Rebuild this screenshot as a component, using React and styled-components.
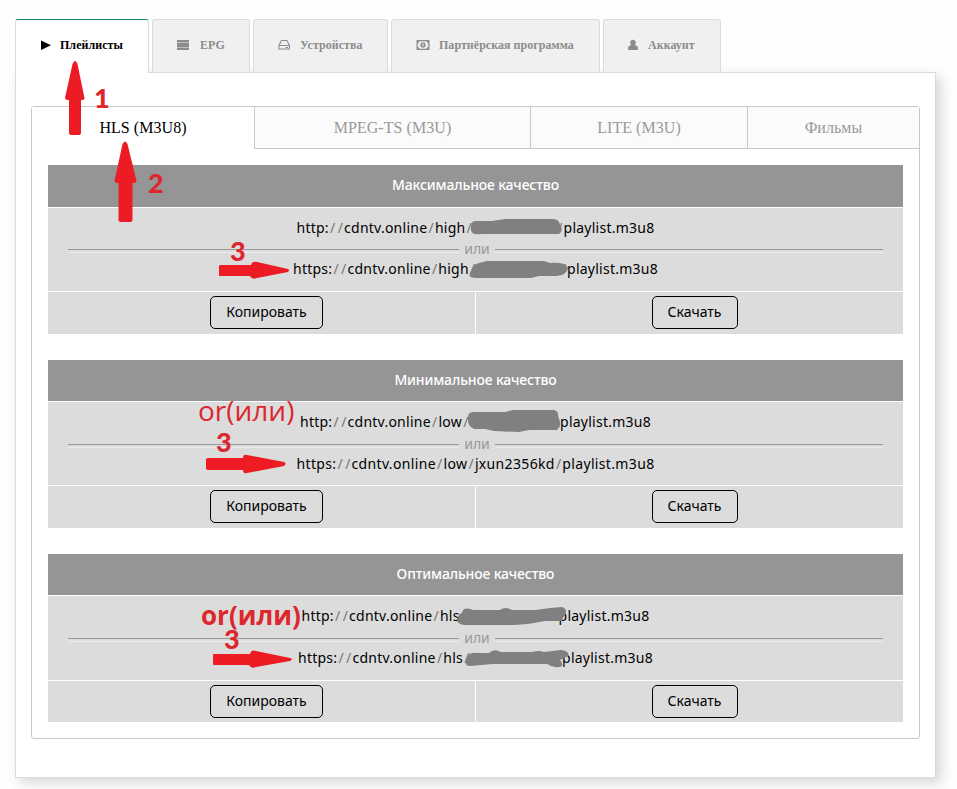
import React from 'react';
import styled, { createGlobalStyle } from 'styled-components';

const GlobalStyle = createGlobalStyle`
  * { box-sizing: border-box; }
  body {
    margin: 0;
    background: #fefefe;
    font-family: "Liberation Serif", "Times New Roman", serif;
  }
`;

const Page = styled.div`
  position: relative;
  width: 957px;
  height: 789px;
  padding: 19px 21px 11px 15px;
  overflow: hidden;
`;

const MainTabs = styled.nav`
  position: relative;
  z-index: 1;
  display: flex;
  gap: 3px;
  height: 53px;
`;

const MainTab = styled.button`
  display: flex;
  align-items: center;
  width: ${(p) => p.$width}px;
  height: ${(p) => (p.$active ? 54 : 53)}px;
  padding: 0 0 ${(p) => (p.$active ? 2 : 1)}px 24px;
  border: 1px solid #dbdbdb;
  border-bottom: 0;
  border-top-color: ${(p) => (p.$active ? '#1f8a55' : '#dbdbdb')};
  border-radius: 3px 3px 0 0;
  background: ${(p) => (p.$active ? '#fff' : '#f0f0f0')};
  color: ${(p) => (p.$active ? '#000' : '#8c8c8c')};
  font: bold 12px "Liberation Serif", serif;
  white-space: nowrap;
`;

const TabIcon = styled.svg`
  flex: none;
  width: ${(p) => p.$width}px;
  height: 12px;
  margin: 0 ${(p) => p.$gap}px 2px 0;
  fill: currentColor;
`;

const TabLabel = styled.span`
  letter-spacing: 0.03px;
`;

const Panel = styled.main`
  height: 706px;
  padding: 33px 15px 0;
  border: 1px solid #dbdbdb;
  background: #fff;
  box-shadow: 5px 5px 12px rgba(0, 0, 0, 0.16);
`;

const Playlists = styled.section`
  height: 633px;
  border: 1px solid #c8c8c8;
  border-radius: 3px;
`;

const FormatTabs = styled.nav`
  display: flex;
  height: 42px;
`;

const FormatTab = styled.button`
  width: ${(p) => p.$width}px;
  padding: ${(p) => (p.$active ? '0 0 1px' : '1px 0 0')};
  border: 0;
  border-left: ${(p) => (p.$active ? 0 : 1)}px solid #c8c8c8;
  border-bottom: ${(p) => (p.$active ? 0 : 1)}px solid #c8c8c8;
  background: ${(p) => (p.$active ? '#fff' : '#fbfbfb')};
  color: ${(p) => (p.$active ? '#000' : '#999')};
  font: 16px "Liberation Serif", serif;
  letter-spacing: 0.05px;
`;

const QualityList = styled.div`
  display: flex;
  flex-direction: column;
  gap: 26px;
  padding: 16px 16px 0;
  font-family: "Noto Sans", sans-serif;
  font-size: 14px;
`;

const Quality = styled.article`
  display: grid;
  grid-template-rows: ${(p) => p.$rows};
  grid-template-columns: 427px 427px;
  gap: 1px;
`;

const QualityTitle = styled.h3`
  grid-column: 1 / -1;
  display: flex;
  align-items: center;
  justify-content: center;
  margin: 0;
  padding-bottom: 3px;
  background: #959595;
  color: #fff;
  font-size: 14px;
  font-weight: 500;
  letter-spacing: -0.15px;
`;

const Links = styled.div`
  grid-column: 1 / -1;
  display: grid;
  grid-template-rows: ${(p) => p.$split}px 2px 34px;
  padding: 0 20px;
  background: #dcdcdc;
`;

const Url = styled.div`
  justify-self: center;
  display: flex;
  align-items: center;
  justify-content: space-between;
  width: ${(p) => p.$width}px;
  padding-bottom: ${(p) => p.$lift}px;
  color: #000;
  letter-spacing: ${(p) => p.$tracking || 0.25}px;
  white-space: nowrap;
`;

const Slash = styled.span`
  display: inline-block;
  width: 7.6px;
  color: #777;
  text-align: center;
  letter-spacing: 0;
`;

const Divider = styled.div`
  display: flex;
  align-items: center;
  justify-content: space-between;
  height: 2px;
  color: #999;
  line-height: 20px;

  &::before,
  &::after {
    content: '';
    width: 391px;
    height: 2px;
    border-top: 1px solid #999;
    border-bottom: 1px solid #ececec;
  }

  &::after { width: 388px; }
`;

const DividerText = styled.span`
  margin-top: -4px;
`;

const Action = styled.div`
  display: flex;
  align-items: flex-start;
  justify-content: center;
  padding: 4px 0 0 10px;
  background: #dcdcdc;
`;

const Button = styled.button`
  width: ${(p) => p.$width}px;
  height: 33px;
  padding: 0 0 2px;
  border: 1px solid #000;
  border-radius: 5px;
  background: transparent;
  color: #000;
  font: 14px "Noto Sans", sans-serif;
`;

const Overlay = styled.svg`
  position: absolute;
  z-index: 2;
  inset: 0;
  width: 957px;
  height: 789px;
  pointer-events: none;
`;

const Note = styled.span`
  position: absolute;
  z-index: 3;
  left: ${(p) => p.$x}px;
  top: ${(p) => p.$y}px;
  color: #dd262d;
  font: ${(p) => p.$weight || 700} ${(p) => p.$size || 26}px/30px "Open Sans", sans-serif;
  white-space: nowrap;
`;

const StepNumber = styled(Note)`
  font: 900 27px/20px Lato, sans-serif;
`;

const icons = {
  play: <path d="M1 1.500 11 6.250 1 11z" />,
  list: <path d="M0 1h12v2.500H0zM0 4h12v4H0zM0 8.500h12V11H0z" />,
  disk: (
    <path
      d="M3.500 1.500h5.500l2.500 5v3.500h-10.500V6.500zM1 6.500h10.500M7.500 8.500h2.500"
      fill="none"
      stroke="currentColor"
      strokeWidth="1.1"
    />
  ),
  money: (
    <>
      <path fillRule="evenodd" d="M.5 1h13v10H.5zM3.500 2.300a2 2 0 0 1-1.700 1.700v4a2 2 0 0 1 1.700 1.700h7a2 2 0 0 1 1.700-1.700V4a2 2 0 0 1-1.700-1.700z" />
      <path fillRule="evenodd" d="M7 3.200a2.600 2.800 0 1 0 0 5.600 2.600 2.800 0 0 0 0-5.600zM6.500 4.300h1v3.300h-1z" />
    </>
  ),
  user: <path d="M5 .8a2.700 2.900 0 0 1 1.800 5.200c2.200.3 3.200 1.400 3.200 4q0 1-1 1H1q-1 0-1-1c0-2.600 1-3.700 3.200-4A2.700 2.900 0 0 1 5 .8z" />,
};

const mainTabs = [
  { label: 'Плейлисты', icon: 'play', width: 134, iconWidth: 12, gap: 8, active: true },
  { label: 'EPG', icon: 'list', width: 98, iconWidth: 13, gap: 10 },
  { label: 'Устройства', icon: 'disk', width: 135, iconWidth: 12, gap: 10 },
  { label: 'Партнёрская программа', icon: 'money', width: 209, iconWidth: 14, gap: 9 },
  { label: 'Аккаунт', icon: 'user', width: 118, iconWidth: 11, gap: 9 },
];

const formatTabs = [
  { label: 'HLS (M3U8)', width: 222, active: true },
  { label: 'MPEG-TS (M3U)', width: 276 },
  { label: 'LITE (M3U)', width: 217 },
  { label: 'Фильмы', width: 172 },
];

const qualities = [
  {
    title: 'Максимальное качество',
    rows: '42px 83px 42px',
    split: 42,
    urls: [
      { parts: ['http://cdntv.online/high/', '/playlist.m3u8'], width: 358, lift: 3 },
      { parts: ['https://cdntv.online/high/', '/playlist.m3u8'], width: 365, lift: 1 },
    ],
  },
  {
    title: 'Минимальное качество',
    rows: '41px 83px 42px',
    split: 43,
    urls: [
      { parts: ['http://cdntv.online/low/', '/playlist.m3u8'], width: 351, lift: 4 },
      { parts: ['https://cdntv.online/low/jxun2356kd/playlist.m3u8'], width: 358, tracking: 0.34, lift: 1 },
    ],
  },
  {
    title: 'Оптимальное качество',
    rows: '41px 84px 41px',
    split: 43,
    urls: [
      { parts: ['http://cdntv.online/hls', '/playlist.m3u8'], width: 348, lift: 4 },
      { parts: ['https://cdntv.online/hls/', '/playlist.m3u8'], width: 355, lift: 1 },
    ],
  },
];

const arrows = [
  'M72.500 64q2.500-6 5 0l7 34q0 2-3.500 2v33q0 2-2 2h-8q-2 0-2-2v-33q-4 0-4-2z',
  'M122.500 144q2.500-5 5 0l9 37q0 2-4 2v37q0 2-2 2h-10q-2 0-2-2v-37q-4 0-4-2z',
  'M220 265h31q1-4 6-3l31 7q2 1 0 3l-31 6q-5 2-7-2h-30q-1 0-1-1v-9q0-1 1-1z',
  'M208 458h35q0-4 4-3l37 7q3 1 0 4l-37 7q-4 1-4-3h-35q-2 0-2-2v-8q0-2 2-2z',
  'M214 654h36q1-5 6-3l34 7q4 1 0 3l-34 6q-5 2-7-2h-35q-1 0-1-1v-9q0-1 1-1z',
];

const scribbles = [
  'M471 226q0-5 5-5h16l13-2h48q6 0 7 6 4 5-1 9l-77 0q-13 2-11-8z',
  'M471 271q2-7 8-8l8-2h57l6 2q16-1 18 5-1 7-12 8l-17 0-8 2h-54q-11 0-6-7z',
  'M468 417q0-5 6-5h31l8-2h41q5 1 4 7 5 8-1 13l-28 0-10 2-25-1-9-2-11 0q-7-3-6-12z',
  'M458 619q0-5 4-6 1-7 11-3h27q5-4 12 0h24l14-2 12-1q6 2 3 8l-4 6-16 0-17 3-14 1h-50q-9-2-6-6z',
  'M467 658q2-6 10-5h12q5-5 12-1h31q8-2 12 0l17-2q9 1 7 6l-8 4q5 6-1 7-6 1-12-3l-17 0h-37l-23 2q-6 0-4-8z',
];

const steps = [
  { text: '1', x: 94, y: 88 },
  { text: '2', x: 148, y: 173 },
  { text: '3', x: 230, y: 241 },
  { text: '3', x: 216, y: 432 },
  { text: '3', x: 224, y: 629 },
];

const notes = [
  { text: 'or(или)', x: 198, y: 395, size: 28, weight: 400 },
  { text: 'or(или)', x: 201, y: 600, size: 26, weight: 700 },
];

function UrlPart({ text }) {
  return (
    <span>
      {text.split(/(\/)/).map((token, i) => (token === '/' ? <Slash key={i}>/</Slash> : token))}
    </span>
  );
}

function UrlLine({ parts, width, tracking, lift }) {
  return (
    <Url $width={width} $tracking={tracking} $lift={lift}>
      {parts.map((part) => <UrlPart key={part} text={part} />)}
    </Url>
  );
}

function QualityBlock({ title, rows, split, urls }) {
  return (
    <Quality $rows={rows}>
      <QualityTitle>{title}</QualityTitle>
      <Links $split={split}>
        <UrlLine {...urls[0]} />
        <Divider><DividerText>или</DividerText></Divider>
        <UrlLine {...urls[1]} />
      </Links>
      <Action><Button $width={113}>Копировать</Button></Action>
      <Action><Button $width={86}>Скачать</Button></Action>
    </Quality>
  );
}

export default function App() {
  return (
    <Page>
      <GlobalStyle />
      <MainTabs>
        {mainTabs.map((tab) => (
          <MainTab key={tab.label} $width={tab.width} $active={tab.active}>
            <TabIcon viewBox={`0 0 ${tab.iconWidth} 12`} $width={tab.iconWidth} $gap={tab.gap}>
              {icons[tab.icon]}
            </TabIcon>
            <TabLabel>{tab.label}</TabLabel>
          </MainTab>
        ))}
      </MainTabs>
      <Panel>
        <Playlists>
          <FormatTabs>
            {formatTabs.map((tab) => (
              <FormatTab key={tab.label} $width={tab.width} $active={tab.active}>{tab.label}</FormatTab>
            ))}
          </FormatTabs>
          <QualityList>
            {qualities.map((quality) => <QualityBlock key={quality.title} {...quality} />)}
          </QualityList>
        </Playlists>
      </Panel>
      <Overlay viewBox="0 0 957 789">
        {arrows.map((d) => <path key={d} d={d} fill="#ed1c24" />)}
        {scribbles.map((d) => <path key={d} d={d} fill="#808080" />)}
      </Overlay>
      {steps.map((step) => (
        <StepNumber key={step.y} $x={step.x} $y={step.y}>{step.text}</StepNumber>
      ))}
      {notes.map((note) => (
        <Note key={note.y} $x={note.x} $y={note.y} $size={note.size} $weight={note.weight}>{note.text}</Note>
      ))}
    </Page>
  );
}
